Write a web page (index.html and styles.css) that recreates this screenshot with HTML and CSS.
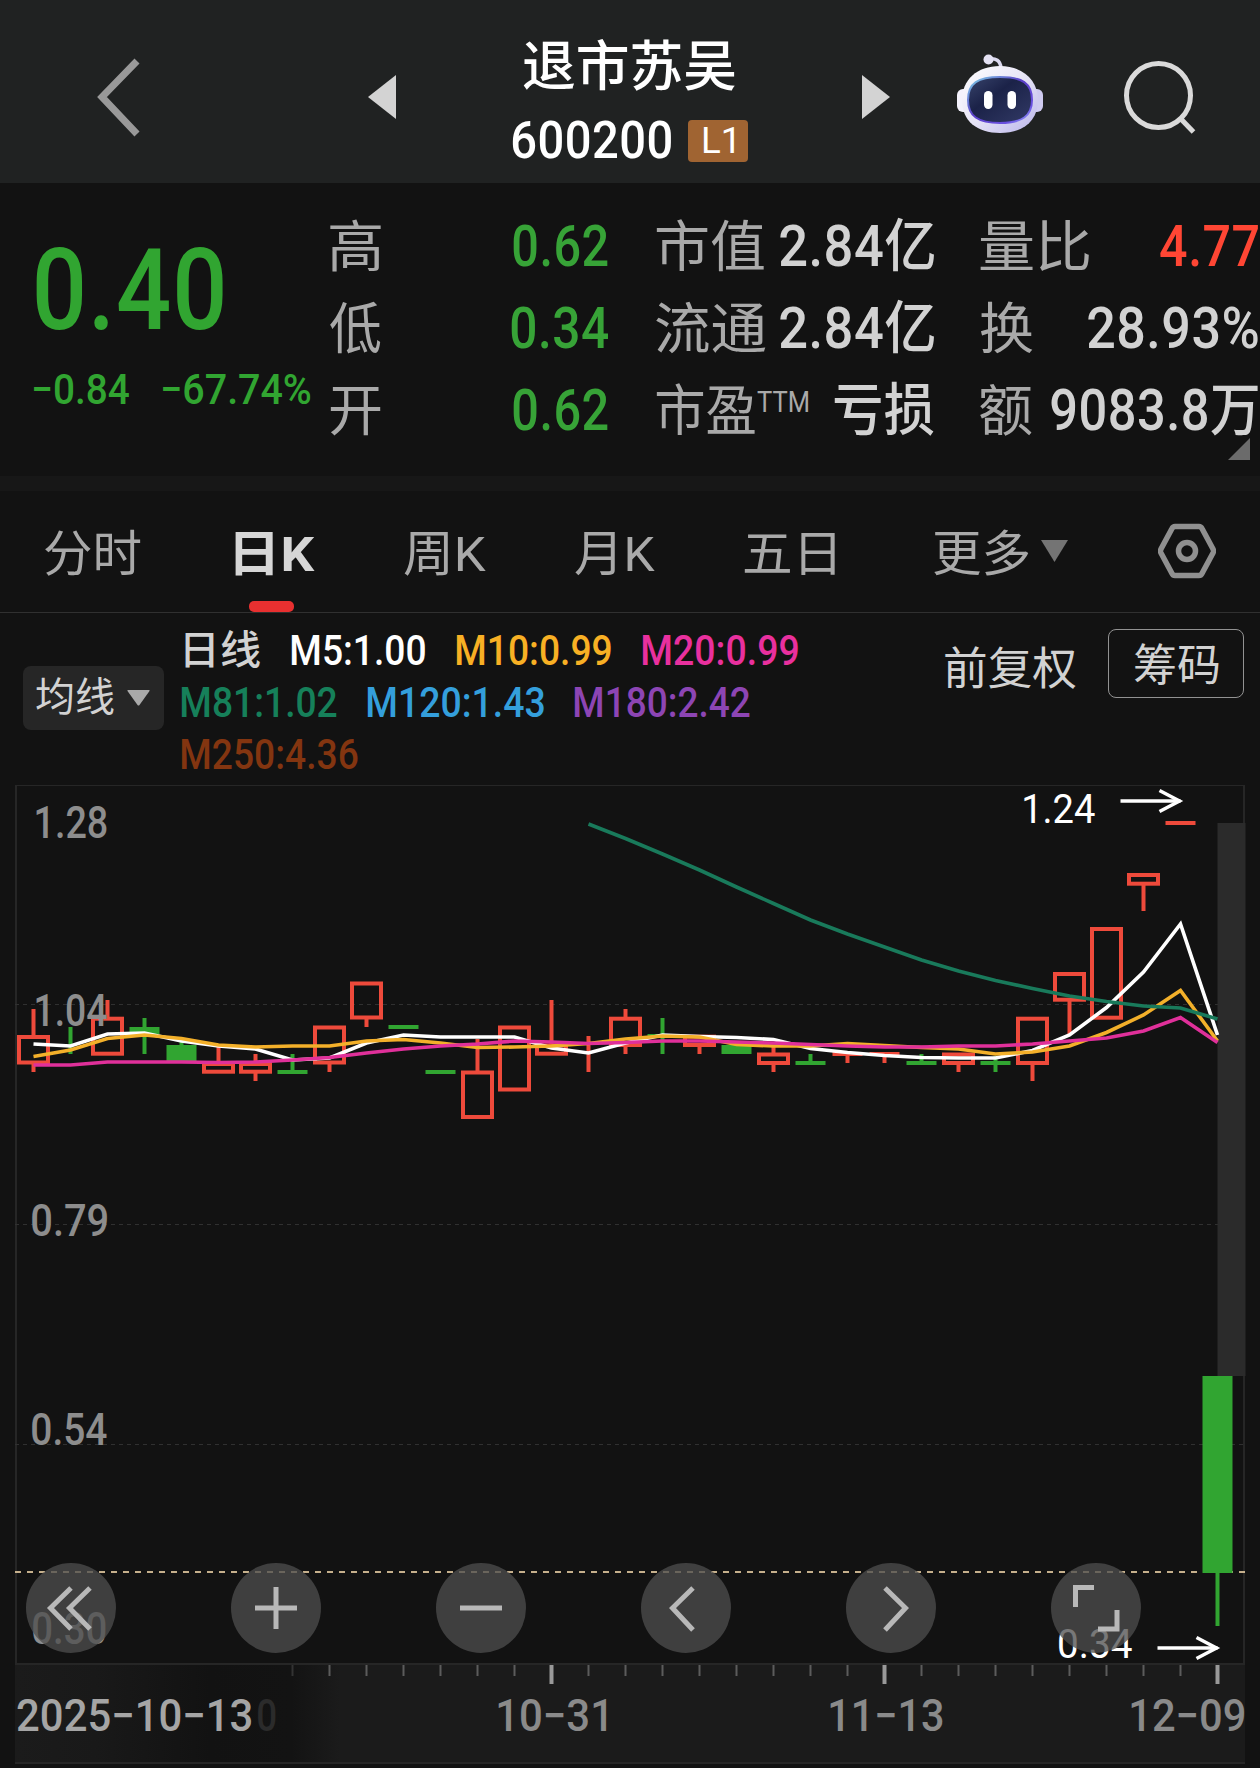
FILE: index.html
```html
<!DOCTYPE html>
<html lang="zh-CN">
<head>
<meta charset="utf-8">
<title>退市苏吴 600200</title>
<link rel="stylesheet" href="styles.css">
</head>
<body>
<header class="topbar">
  <svg class="back" width="48" height="84" viewBox="0 0 48 84"><path d="M40 6 L5 42 L40 79" /></svg>
  <svg class="arrow" width="28" height="44" viewBox="0 0 28 44"><path d="M28 0V44L0 22Z"/></svg>
  <div class="title">
    <span class="name" data-w="212">退市苏吴</span>
    <div class="code-row"><span class="code" data-w="159">600200</span><span class="badge"><span data-w="31">L1</span></span></div>
  </div>
  <svg class="arrow" width="28" height="44" viewBox="0 0 28 44"><path d="M0 0V44L28 22Z"/></svg>
  <svg class="robot" width="86" height="80" viewBox="0 0 86 80">
    <defs>
      <linearGradient id="shell" x1="0" y1="0" x2="1" y2="1"><stop offset="0" stop-color="#fff"/><stop offset=".5" stop-color="#e6e4f6"/><stop offset="1" stop-color="#b9b4ea"/></linearGradient>
      <linearGradient id="rim" x1="0" y1="0" x2="1" y2="1"><stop offset="0" stop-color="#7fd6e8"/><stop offset=".45" stop-color="#5b3fc8"/><stop offset=".8" stop-color="#6a50e0"/><stop offset="1" stop-color="#9ab0ff"/></linearGradient>
      <linearGradient id="glass" x1="0" y1="0" x2="1" y2="1"><stop offset="0" stop-color="#38446c"/><stop offset=".4" stop-color="#1b2248"/><stop offset="1" stop-color="#323a66"/></linearGradient>
    </defs>
    <path d="M31 5 Q43 3 44 14" fill="none" stroke="#dcdaf0" stroke-width="3.5"/>
    <circle cx="31.500" cy="5.500" r="5" fill="#e4e2f4"/>
    <rect x="0" y="35" width="14" height="23" rx="6" fill="#f3f2fc"/>
    <rect x="72" y="35" width="14" height="23" rx="6" fill="#cfcbf0"/>
    <path d="M43 12C66 12 81 26 81 46C81 67 66 79 43 79C20 79 5 67 5 46C5 26 20 12 43 12Z" fill="url(#shell)"/>
    <path d="M43 23C65 23 75 29 75 46C75 62 65 69 43 69C21 69 11 62 11 46C11 29 21 23 43 23Z" fill="url(#glass)" stroke="url(#rim)" stroke-width="2"/>
    <rect x="27" y="37" width="8.500" height="18" rx="4.200" fill="#fff"/>
    <rect x="50.500" y="37" width="8.500" height="18" rx="4.200" fill="#fff"/>
  </svg>
  <svg class="search" width="76" height="74" viewBox="0 0 76 74"><circle cx="36.500" cy="35.500" r="32"/><path d="M58 58 L71.500 72"/></svg>
</header>

<section class="quote">
  <div class="price">
    <span class="last" data-w="187">0.40</span>
    <div class="change"><span data-w="95">−0.84</span><span data-w="148">−67.74%</span></div>
  </div>
  <dl class="stats ohl">
    <div><dt data-w="51">高</dt><dd data-w="95">0.62</dd></div>
    <div><dt data-w="51">低</dt><dd data-w="97">0.34</dd></div>
    <div><dt data-w="51">开</dt><dd data-w="95">0.62</dd></div>
  </dl>
  <dl class="stats cap">
    <div><dt data-w="108">市值</dt><dd data-w="154">2.84亿</dd></div>
    <div><dt data-w="110">流通</dt><dd data-w="154">2.84亿</dd></div>
    <div><dt class="pe"><span data-w="99">市盈</span><span class="ttm" data-w="51">TTM</span></dt><dd data-w="100">亏损</dd></div>
  </dl>
  <dl class="stats vol">
    <div><dt data-w="109">量比</dt><dd class="up" data-w="98">4.77</dd></div>
    <div><dt data-w="53">换</dt><dd data-w="170">28.93%</dd></div>
    <div><dt data-w="52">额</dt><dd data-w="207">9083.8万</dd></div>
  </dl>
  <i class="corner"></i>
</section>

<nav class="tabs">
  <span class="tab" data-w="96">分时</span>
  <span class="tab active"><span data-w="80">日K</span></span>
  <span class="tab" data-w="82">周K</span>
  <span class="tab" data-w="80">月K</span>
  <span class="tab" data-w="91">五日</span>
  <span class="tab more"><span data-w="95">更多</span><svg width="27" height="22" viewBox="0 0 27 22"><path d="M0 0H27L13.500 22Z" fill="#747474"/></svg></span>
  <svg class="gear" width="58" height="56" viewBox="0 0 58 56"><path d="M17 3.500H41Q43 3.500 44 5.500L55 26Q56 28 55 30L44 50.500Q43 52.500 41 52.500H17Q15 52.500 14 50.500L3 30Q2 28 3 26L14 5.500Q15 3.500 17 3.500Z"/><circle cx="29" cy="28" r="8.500"/></svg>
</nav>

<section class="legend">
  <div class="ma-btn"><span data-w="78">均线</span><svg width="23" height="16" viewBox="0 0 23 16"><path d="M1 0H22Q23 0 22.500 1L12.500 15Q11.500 16 10.500 15L.5 1Q0 0 1 0Z" fill="#a9a9a9"/></svg></div>
  <div class="ma-list">
    <div class="ma-line first"><span class="kind" data-w="75">日线</span><span class="m5" data-w="133">M5:1.00</span><span class="m10" data-w="154">M10:0.99</span><span class="m20" data-w="155">M20:0.99</span></div>
    <div class="ma-line"><span class="m81" data-w="155">M81:1.02</span><span class="m120" data-w="176">M120:1.43</span><span class="m180" data-w="175">M180:2.42</span></div>
    <div class="ma-line"><span class="m250" data-w="176">M250:4.36</span></div>
  </div>
  <span class="adjust" data-w="131">前复权</span>
  <span class="chips"><span data-w="85">筹码</span></span>
</section>

<section class="chart">
  <svg id="plot" width="1260" height="983" viewBox="0 785 1260 983">
    <defs>
      <linearGradient id="fade" gradientUnits="userSpaceOnUse" x1="15" y1="0" x2="340" y2="0">
        <stop offset="0" stop-color="#1b1b1b"/><stop offset=".25" stop-color="#191919"/><stop offset=".6" stop-color="#121212"/><stop offset=".85" stop-color="#131313"/><stop offset="1" stop-color="#1b1b1b"/>
      </linearGradient>
    </defs>
  </svg>
  <div class="controls">
    <button><svg viewBox="0 0 90 90"><path d="M45 25L24.500 45L45 66M64 25L43.500 45L64 66"/></svg></button>
    <button><svg viewBox="0 0 90 90"><path d="M24 45H66M45 24V66"/></svg></button>
    <button><svg viewBox="0 0 90 90"><path d="M24 45H66"/></svg></button>
    <button><svg viewBox="0 0 90 90"><path d="M52 25L31.500 45L52 67"/></svg></button>
    <button><svg viewBox="0 0 90 90"><path d="M39 25L59.500 45L39 67"/></svg></button>
    <button><svg viewBox="0 0 90 90"><path d="M43 24.500H24.500V44M66 47V66H47"/></svg></button>
  </div>
</section>
<script src="app.js"></script>
</body>
</html>
```
FILE: styles.css
```css
* { box-sizing: border-box; margin: 0; padding: 0; }
body {
  width: 1260px;
  height: 1768px;
  overflow: hidden;
  background: #121212;
  color: #d2d2d2;
  font-family: Roboto, "Noto Sans CJK SC", sans-serif;
}
svg { display: block; }
[data-w] { display: inline-block; flex: none; white-space: nowrap; text-align: left; }
.ink { display: inline-block; transform-origin: 0 50%; }

/* top bar */
.topbar {
  height: 183px;
  background: #202222;
  display: grid;
  grid-template-columns: 271px 144px 350px 95px 165px 76px;
  padding-left: 97px;
  align-items: start;
}
.back { margin-top: 55px; fill: none; stroke: #999; stroke-width: 7; }
.arrow { margin-top: 75px; fill: #d3d3d3; }
.title { padding: 36px 0 0; color: #fff; font-weight: 500; }
.name { display: block; margin-left: 11px; font-size: 54px; line-height: 64px; }
.code-row { display: flex; gap: 17px; margin-top: 19px; align-items: center; }
.code { font-size: 52px; line-height: 43px; letter-spacing: .01em; }
.badge {
  width: 60px; height: 42px; border-radius: 4px; background: #a06432;
  display: flex; justify-content: center; align-items: center;
  font-size: 36px; line-height: 42px; font-weight: 400;
}
.robot { margin-top: 54px; }
.search { margin-top: 60px; fill: none; stroke: #dadada; stroke-width: 5; }

/* quote */
.quote {
  position: relative;
  height: 308px;
  border-bottom: 15px solid #171717;
  display: grid;
  grid-template-columns: 296px 326px 324px 280px;
  padding-left: 34px;
  font-size: 57px;
  font-weight: 500;
}
.price { color: #31a531; padding-top: 58px; }
.last { display: block; margin-left: 2px; font-size: 113px; line-height: 100px; letter-spacing: .01em; }
.change { display: flex; gap: 34px; margin-top: 29px; font-size: 42px; line-height: 40px; font-weight: 500; }
.stats { padding-top: 23px; }
.stats > div { display: flex; justify-content: space-between; height: 82px; line-height: 82px; }
.stats dt { color: #a9a9a9; font-weight: 400; font-size: 55px; }
.stats dd { letter-spacing: .01em; }
.ohl > div { width: 278px; }
.ohl dd { color: #37a337; }
.cap > div { width: 278px; }
.vol > div { width: 278px; }
.vol .up { color: #ff4634; }
.pe { display: flex; gap: 2px; }
.ttm { font-size: 29px; line-height: 64px; }
.corner { position: absolute; right: 10px; bottom: 16px; border-left: 22px solid transparent; border-bottom: 22px solid #6b6b6b; }

/* tabs */
.tabs {
  height: 122px;
  border-bottom: 1px solid #303030;
  display: grid;
  grid-template-columns: 190px 169px 171px 169px 190px 224px 58px;
  padding-left: 45px;
  color: #a9a9a9;
  font-size: 49px;
  line-height: 127px;
}
.active { position: relative; color: #d6d6d6; font-weight: 700; }
.active::after { content: ""; position: absolute; left: 14px; top: 110px; width: 45px; height: 11px; border-radius: 5px; background: #e83030; }
.more { display: flex; gap: 12px; }
.more svg { margin-top: 49px; }
.gear { margin-top: 32px; fill: none; stroke: #909090; stroke-width: 5.5; }

/* moving-average legend */
.legend {
  height: 172px;
  display: grid;
  grid-template-columns: 159px 763px 163px 135px;
  padding-left: 23px;
  font-size: 42px;
}
.ma-btn {
  width: 141px; height: 64px; margin-top: 53px; border-radius: 8px; background: #262626;
  display: flex; align-items: center; gap: 13px; padding-left: 13px;
  font-size: 40px; line-height: 68px;
}
.ma-list { padding-top: 12px; }
.ma-line { display: flex; gap: 31px; height: 52px; line-height: 52px; font-weight: 500; }
.ma-line.first { gap: 32px; padding-left: 3px; }
.kind { font-size: 40px; }
.m5 { color: #fff; }
.m10 { color: #f8b024; }
.m20 { color: #e9309e; }
.m81 { color: #16805a; }
.m120 { color: #349fdc; }
.m180 { color: #8d45b4; }
.m250 { color: #833510; }
.adjust { margin-top: 27px; font-size: 45px; line-height: 60px; }
.chips {
  width: 136px; height: 69px; margin-top: 16px; border: 1px solid #929292; border-radius: 8px;
  display: flex; justify-content: center; font-size: 44px; line-height: 72px;
}

/* chart */
.chart { position: relative; height: 983px; }
.controls { position: absolute; left: 26px; top: 778px; display: flex; gap: 115px; }
.controls button { width: 90px; height: 90px; border: 0; border-radius: 50%; background: rgba(78, 78, 78, .76); }
.controls svg { width: 90px; height: 90px; fill: none; stroke: #b8b8b8; stroke-width: 5; }
```
FILE: app.js
```js
const ctx = document.createElement('canvas').getContext('2d');

function ink(text, font, spacing) {
  ctx.font = font;
  ctx.letterSpacing = spacing;
  const m = ctx.measureText(text);
  return { left: -m.actualBoundingBoxLeft, width: m.actualBoundingBoxLeft + m.actualBoundingBoxRight };
}

document.querySelectorAll('[data-w]').forEach(el => {
  const cs = getComputedStyle(el);
  const text = el.textContent;
  const m = ink(text, `${cs.fontWeight} ${cs.fontSize} ${cs.fontFamily}`, cs.letterSpacing === 'normal' ? '0px' : cs.letterSpacing);
  const w = +el.dataset.w;
  const s = w / m.width;
  const span = document.createElement('span');
  span.className = 'ink';
  span.textContent = text;
  span.style.transform = `translateX(${-m.left * s}px) scaleX(${s})`;
  el.style.width = w + 'px';
  el.replaceChildren(span);
});

const plot = document.getElementById('plot');
function add(tag, attrs, text) {
  const n = document.createElementNS('http://www.w3.org/2000/svg', tag);
  for (const k in attrs) n.setAttribute(k, attrs[k]);
  if (text) n.textContent = text;
  plot.appendChild(n);
}
function label(text, x0, x1, base, size, fill, weight = 500) {
  const family = 'Roboto, sans-serif';
  const m = ink(text, `${weight} ${size}px ${family}`, '0px');
  const s = (x1 - x0) / m.width;
  add('text', { transform: `translate(${x0 - m.left * s} ${base}) scale(${s} 1)`, 'font-family': family,
    'font-size': size, 'font-weight': weight, fill }, text);
}
const line = (x1, y1, x2, y2, stroke, w, extra = {}) => add('line', { x1, y1, x2, y2, stroke, 'stroke-width': w, ...extra });
const X = i => 33.5 + 37 * i;

// frame, grid, date strip
add('rect', { x: 15, y: 1664, width: 1230, height: 100, fill: '#1b1b1b' });
add('rect', { x: 15, y: 1664, width: 325, height: 100, fill: 'url(#fade)' });
add('rect', { x: 16, y: 785, width: 1228, height: 879, fill: 'none', stroke: '#262626', 'stroke-width': 2 });
line(15, 1763, 1245, 1763, '#262626', 2);
[1004.5, 1224.5, 1444.5].forEach(y => line(15, y, 1245, y, '#303030', 1, { 'stroke-dasharray': '4 4' }));
add('rect', { x: 1217.5, y: 823, width: 28, height: 553, fill: '#2b2b2b' });
line(15, 1572, 1245, 1572, '#c6b08c', 2, { 'stroke-dasharray': '6 6' });

// [up?, body top, body bottom, wick top, wick bottom]; equal body values draw a dash
const RED = '#ee4a3b', GREEN = '#31a531';
const candles = [
  [1, 1035, 1064.5, 1009, 1072], [0, 0, 0, 1027, 1054], [1, 1016.7, 1055.7, 1000, 0], [0, 1027, 1034, 1018, 1054],
  [0, 1045, 1061, 1041, 0], [1, 1062, 1073.7, 1045, 0], [1, 1062, 1073.7, 1054, 1081], [0, 1072, 1072, 1054, 0],
  [1, 1025.5, 1064.5, 0, 1072], [1, 981.5, 1019.5, 0, 1027], [0, 1027, 1027, 0, 0], [0, 1072, 1072, 0, 0],
  [1, 1070.5, 1119, 1039, 0], [1, 1025.5, 1091.5, 0, 0], [1, 1043.5, 1055.7, 1000, 0], [1, 0, 0, 1036, 1072],
  [1, 1016.7, 1047, 1009, 1054], [0, 1036, 1036, 1018, 1054], [1, 1034.7, 1047, 0, 1054], [0, 1045, 1054, 0, 0],
  [1, 1052.5, 1065, 1045, 1072], [0, 1063, 1063, 1054, 0], [1, 1054, 1054, 0, 1063], [1, 1054, 1054, 0, 1063],
  [0, 1063, 1063, 1054, 0], [1, 1052.5, 1065, 0, 1072], [0, 1063, 1063, 1056, 1072], [1, 1016.7, 1065, 0, 1081],
  [1, 972, 1001.7, 0, 1034], [1, 927, 1019.7, 0, 0], [1, 873, 885.7, 0, 911], [1, 823, 823, 0, 0], [0, 1376, 1573, 0, 1626]
];
candles.forEach(([up, t, b, wt, wb], i) => {
  const x = X(i), c = up ? RED : GREEN;
  if (!t) return line(x, wt, x, wb, c, 4);
  if (wt) line(x, wt, x, t + 1, c, 4);
  if (wb) line(x, b - 1, x, wb, c, 4);
  if (t === b) add('rect', { x: x - 15, y: t - 2, width: 30, height: 4, fill: c });
  else if (up) add('rect', { x: x - 14.5, y: t + 2, width: 29, height: b - t - 4, fill: 'none', stroke: c, 'stroke-width': 4 });
  else add('rect', { x: x - 15, y: t, width: 30, height: b - t, fill: c });
});

// moving averages
const curve = (start, ys, stroke) => add('polyline', { points: ys.map((y, i) => X(i + start) + ',' + y).join(' '), fill: 'none', stroke, 'stroke-width': 3.6 });
curve(0, [1044, 1046, 1034, 1033, 1041, 1046, 1049, 1060, 1058, 1043, 1035, 1037, 1037, 1037, 1048, 1053, 1043, 1035, 1036.5, 1037.5, 1039.5, 1048.5, 1052.5, 1055.5, 1057.5, 1058, 1058, 1050.5, 1035, 1007.5, 972, 924, 1035], '#fff');
curve(0, [1056.5, 1050, 1038.5, 1035, 1038.5, 1045, 1047, 1046, 1046, 1041, 1039.5, 1043, 1047.5, 1047, 1046, 1043.5, 1039, 1036, 1037, 1044.5, 1046, 1046, 1043.5, 1045.5, 1047.5, 1049, 1054, 1052, 1046, 1032.5, 1015, 990.5, 1041], '#f3b02a');
curve(0, [1065, 1065, 1062, 1062, 1062, 1062.5, 1062, 1060, 1057.5, 1053, 1049, 1046, 1044, 1041, 1042, 1043.5, 1042.5, 1041, 1041, 1042, 1043, 1044.5, 1046, 1047, 1047, 1046, 1046, 1044, 1041, 1038, 1031, 1017.5, 1042.5], '#e0309a');
curve(15, [824, 838.5, 854, 870, 887, 903.5, 920, 934, 947, 960, 971, 980.5, 988.5, 996, 1001.5, 1006, 1008, 1019], '#197a5b');

// price labels
label('1.28', 36, 107, 838, 45, '#8d8d8d');
label('1.04', 36, 107, 1026, 45, '#8d8d8d');
label('0.79', 32, 107, 1236, 45, '#8d8d8d');
label('0.54', 32, 107, 1445, 45, '#8d8d8d');
label('0.30', 33, 106, 1644, 45, '#8d8d8d');
function marker(text, x0, x1, base, tip, y) {
  label(text, x0, x1, base, 40, '#fff', 400);
  line(tip - 60, y, tip, y, '#fff', 3.5);
  add('path', { d: `M${tip - 21} ${y - 10.5}L${tip - 1} ${y}L${tip - 21} ${y + 10.5}`, fill: 'none', stroke: '#fff', 'stroke-width': 3.5 });
}
marker('1.24', 1024, 1095, 823, 1180.5, 801);
marker('0.34', 1059, 1132, 1658, 1217.5, 1648);

// date axis
for (let i = 7; i <= 32; i++) {
  const major = i === 14 || i === 23 || i === 32;
  line(X(i), 1665, X(i), major ? 1684 : 1676, major ? '#999' : i === 7 ? '#333' : '#5c5c5c', major ? 4 : 2);
}
label('2025−10−13', 17, 252, 1731, 45, '#a5a5a5');
label('0', 258, 276, 1731, 45, '#2b2b2b');
label('10−31', 498, 606, 1731, 45, '#8a8a8a');
label('11−13', 830, 943, 1731, 45, '#8a8a8a');
label('12−09', 1131, 1244, 1731, 45, '#8a8a8a');
```
